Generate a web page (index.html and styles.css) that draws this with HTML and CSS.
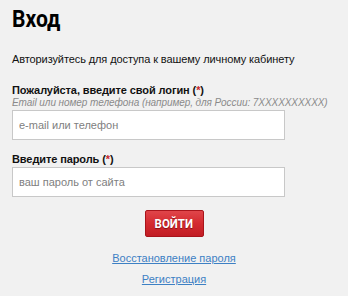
FILE: index.html
```html
<!DOCTYPE html>
<html>
<head>
<meta charset="utf-8">
<link rel="stylesheet" href="styles.css">
</head>
<body>
<div class="page">
  <h1 class="title"><span class="title-text">Вход</span></h1>
  <p class="intro">Авторизуйтесь для доступа к вашему личному кабинету</p>
  <form class="form">
    <div class="field">
      <label class="label">Пожалуйста, введите свой логин (<span class="req">*</span>)</label>
      <div class="hint">Email или номер телефона (например, для России: 7XXXXXXXXXX)</div>
      <input class="input" type="text" placeholder="e-mail или телефон">
    </div>
    <div class="field">
      <label class="label">Введите пароль (<span class="req">*</span>)</label>
      <input class="input" type="password" placeholder="ваш пароль от сайта">
    </div>
    <div class="actions">
      <button class="btn" type="button"><span class="btn-text">ВОЙТИ</span></button>
      <a class="link" href="#">Восстановление пароля</a>
      <a class="link" href="#">Регистрация</a>
    </div>
  </form>
</div>
</body>
</html>
```
FILE: styles.css
```css
html, body {
  margin: 0;
  padding: 0;
  background: #f1f1f1;
}
.page {
  width: 348px;
  height: 296px;
  box-sizing: border-box;
  padding: 4px 12px 0 12px;
  font-family: "Liberation Sans", Arial, sans-serif;
  font-size: 11px;
  color: #111;
}
.title {
  margin: 0;
  font-family: Roboto, "DejaVu Sans", sans-serif;
  font-weight: bold;
  font-size: 24px;
  line-height: 30px;
  color: #000;
}
.title-text {
  display: inline-block;
  transform: scaleX(0.88);
  transform-origin: left center;
}
.intro {
  margin: 18px 0 0 0;
  line-height: 14px;
  letter-spacing: -0.1px;
}
.form {
  margin-top: 17px;
}
.field {
  display: flex;
  flex-direction: column;
  margin-bottom: 12px;
}
.label {
  font-weight: bold;
  line-height: 14px;
  letter-spacing: -0.1px;
}
.req {
  color: #c8262b;
}
.hint {
  font-style: italic;
  font-size: 10px;
  color: #8a8a8a;
  line-height: 12px;
  white-space: nowrap;
  letter-spacing: -0.07px;
}
.input {
  box-sizing: border-box;
  width: 273px;
  height: 30px;
  margin-top: 1px;
  border: 1px solid #c8c8c8;
  background: #fff;
  padding: 0 6px;
  font-family: "Liberation Sans", Arial, sans-serif;
  font-size: 11px;
  color: #333;
  outline: none;
}
.input::placeholder {
  color: #808080;
}
.actions {
  width: 348px;
  margin-left: -12px;
  display: flex;
  flex-direction: column;
  align-items: center;
}
.btn {
  margin-top: 1px;
  width: 59px;
  height: 27px;
  border: 1px solid #a8141b;
  border-radius: 2px;
  background: linear-gradient(#e0454a 0%, #d42a30 50%, #c11d24 100%);
  color: #fff;
  font-family: Roboto, "DejaVu Sans", sans-serif;
  font-weight: bold;
  font-size: 13px;
  padding: 0;
  text-shadow: 0 1px 1px rgba(80,0,0,0.6);
  cursor: pointer;
}
.btn-text {
  display: inline-block;
  transform: scaleX(0.88);
}
.link {
  color: #3d80c4;
  text-decoration: underline;
  line-height: 14px;
}
.link:first-of-type {
  margin-top: 14px;
}
.link + .link {
  margin-top: 7px;
}
```
